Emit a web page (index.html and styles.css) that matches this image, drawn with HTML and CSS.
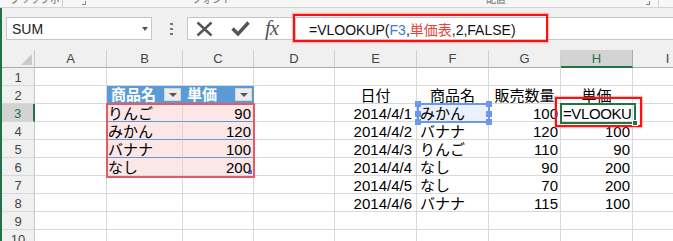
FILE: index.html
```html
<!DOCTYPE html>
<html lang="ja">
<head>
<meta charset="utf-8">
<title>VLOOKUP</title>
<link rel="stylesheet" href="styles.css">
</head>
<body>
<div class="app">
  <div class="ribbon">
    <span class="rlabel l1">クリップボード</span>
    <span class="rsep s1"></span>
    <span class="launcher ln1"></span>
    <span class="rlabel l2">フォント</span>
    <span class="rlabel l3">配置</span>
    <span class="launcher ln2"></span>
    <span class="rsep s2"></span>
  </div>
  <div class="main">
    <div class="fbar">
      <div class="namebox"><span>SUM</span><span class="nbdrop"></span></div>
      <svg class="dots" width="3" height="12" viewBox="0 0 3 12"><rect x="0" y="0" width="3" height="2" fill="#777"/><rect x="0" y="5" width="3" height="2" fill="#777"/><rect x="0" y="10" width="3" height="2" fill="#777"/></svg>
      <div class="fxbox">
        <svg class="ic-x" width="17" height="16" viewBox="0 0 17 16"><path d="M1.5 1.5 L15.5 14.5 M15.5 1.5 L1.5 14.5" stroke="#555" stroke-width="2.4" fill="none"/></svg>
        <svg class="ic-ok" width="19" height="15" viewBox="0 0 19 15"><path d="M1.5 7.5 L7 13 L17.5 1.5" stroke="#555" stroke-width="3.4" fill="none"/></svg>
        <span class="ic-fx">fx</span>
      </div>
      <div class="finput">
        <span class="ftext">=VLOOKUP(<span class="fblue">F3</span>,<span class="fred">単価表</span>,2,FALSE)</span>
        <div class="fmark"></div>
      </div>
    </div>
    <div class="sheet">
      <div class="grid">
        <div class="corner"><span class="tri"></span></div>
        <div class="ch">A</div><div class="ch">B</div><div class="ch">C</div><div class="ch">D</div><div class="ch">E</div><div class="ch">F</div><div class="ch">G</div><div class="ch on">H</div><div class="ch">I</div>

        <div class="rh">1</div><div class="c"></div><div class="c"></div><div class="c"></div><div class="c"></div><div class="c"></div><div class="c"></div><div class="c"></div><div class="c"></div><div class="c"></div>

        <div class="rh">2</div><div class="c"></div>
        <div class="c th"><span>商品名</span><span class="dd"></span></div>
        <div class="c th"><span>単価</span><span class="dd"></span></div>
        <div class="c"></div><div class="c ctr">日付</div><div class="c ctr">商品名</div><div class="c ctr">販売数量</div><div class="c ctr">単価</div><div class="c"></div>

        <div class="rh on">3</div><div class="c"></div>
        <div class="c pk">りんご</div><div class="c pk r">90</div>
        <div class="c"></div><div class="c r dt">2014/4/1</div><div class="c fl selfill">みかん</div><div class="c r">100</div><div class="c hv">=VLOOKUP</div><div class="c"></div>

        <div class="rh">4</div><div class="c"></div>
        <div class="c pk">みかん</div><div class="c pk r">120</div>
        <div class="c"></div><div class="c r dt">2014/4/2</div><div class="c fl">バナナ</div><div class="c r">120</div><div class="c r">100</div><div class="c"></div>

        <div class="rh">5</div><div class="c"></div>
        <div class="c pk">バナナ</div><div class="c pk r">100</div>
        <div class="c"></div><div class="c r dt">2014/4/3</div><div class="c fl">りんご</div><div class="c r">110</div><div class="c r">90</div><div class="c"></div>

        <div class="rh">6</div><div class="c"></div>
        <div class="c pk last">なし</div><div class="c pk last r">200</div>
        <div class="c"></div><div class="c r dt">2014/4/4</div><div class="c fl">なし</div><div class="c r">90</div><div class="c r">200</div><div class="c"></div>

        <div class="rh">7</div><div class="c"></div><div class="c"></div><div class="c"></div><div class="c"></div>
        <div class="c r dt">2014/4/5</div><div class="c fl">なし</div><div class="c r">70</div><div class="c r">200</div><div class="c"></div>

        <div class="rh">8</div><div class="c"></div><div class="c"></div><div class="c"></div><div class="c"></div>
        <div class="c r dt">2014/4/6</div><div class="c fl">バナナ</div><div class="c r">115</div><div class="c r">100</div><div class="c"></div>

        <div class="rh">9</div><div class="c"></div><div class="c"></div><div class="c"></div><div class="c"></div><div class="c"></div><div class="c"></div><div class="c"></div><div class="c"></div><div class="c"></div>

        <div class="rh">10</div><div class="c"></div><div class="c"></div><div class="c"></div><div class="c"></div><div class="c"></div><div class="c"></div><div class="c"></div><div class="c"></div><div class="c"></div>
      </div>
      <div class="overlay">
        <div class="tblmark"></div>
        <div class="tblcorner"></div>
        <div class="fsel"><i class="h tl"></i><i class="h tr"></i><i class="h ml"></i><i class="h mr"></i><i class="h bl"></i><i class="h br"></i></div>
        <div class="active"><i class="fillh"></i></div>
        <div class="hmark"></div>
      </div>
    </div>
  </div>
</div>
</body>
</html>
```

FILE: styles.css
```css
* { box-sizing: border-box; }
html, body { margin: 0; padding: 0; }
body {
  width: 673px;
  height: 241px;
  overflow: hidden;
  background: #ffffff;
  font-family: "Liberation Sans", "Noto Sans CJK JP", sans-serif;
}
.app { display: flex; flex-direction: column; height: 241px; }

/* ribbon strip (cut off at top) */
.ribbon {
  height: 8px;
  flex: none;
  background: #f7f7f7;
  border-bottom: 1px solid #d4d4d4;
  display: flex;
  align-items: flex-end;
  overflow: hidden;
  font-family: "Noto Sans CJK JP", sans-serif;
  font-size: 10px;
  color: #6a6a6a;
}
.rlabel { line-height: 12px; margin-bottom: 2px; white-space: nowrap; overflow: hidden; flex: none; }
.l1 { margin-left: 10px; width: 50px; }
.rsep { width: 1px; height: 7px; background: #d0d0d0; flex: none; }
.s1 { margin-left: 2px; }
.launcher { width: 4px; height: 4px; border-right: 1px solid #888; border-bottom: 1px solid #888; flex: none; margin-bottom: 2px; }
.ln1 { margin-left: 19px; }
.l2 { margin-left: 106px; }
.l3 { margin-left: 254px; }
.ln2 { margin-left: 140px; }
.s2 { margin-left: 8px; }

.main {
  flex: 1;
  display: flex;
  flex-direction: column;
  border-left: 2px solid #217346;
  min-height: 0;
}

/* formula bar */
.fbar {
  height: 42px;
  flex: none;
  background: #f0f0f0;
  display: flex;
  align-items: flex-start;
  padding: 9px 0 0 4px;
}
.namebox {
  width: 146px;
  height: 23px;
  background: #fff;
  border: 1px solid #c6c6c6;
  display: flex;
  align-items: center;
  padding: 0 3px 0 5px;
  font-size: 14px;
  color: #222;
}
.nbdrop {
  margin-left: auto;
  width: 0; height: 0;
  border-left: 3.5px solid transparent;
  border-right: 3.5px solid transparent;
  border-top: 4px solid #555;
}
.dots { margin: 6px 0 0 18px; flex: none; }
.fxbox {
  width: 106px;
  height: 23px;
  margin-left: 14px;
  background: #fff;
  border: 1px solid #c6c6c6;
  border-right: none;
  display: flex;
  align-items: center;
  padding-left: 8px;
}
.ic-x { flex: none; }
.ic-ok { flex: none; margin-left: 18px; }
.ic-fx {
  margin-left: 15px;
  font-family: "Liberation Serif", serif;
  font-style: italic;
  font-size: 21px;
  line-height: 21px;
  color: #555;
  letter-spacing: -1px;
}
.finput {
  flex: 1;
  height: 23px;
  margin-left: 2px;
  background: #fff;
  border: 1px solid #c6c6c6;
  border-right: none;
  position: relative;
  padding-left: 13px;
  display: flex;
  align-items: center;
  font-size: 14px;
  color: #111;
  white-space: nowrap;
}
.fblue { color: #3c78d8; }
.fred { color: #e8453c; }
.fmark {
  position: absolute;
  left: -3px;
  top: -4px;
  width: 255px;
  height: 28px;
  border: 2px solid #ff1010;
  box-shadow: 0 0 1px 1px rgba(255, 80, 80, 0.35);
}

/* sheet */
.sheet { position: relative; flex: 1; overflow: hidden; }
.grid, .overlay {
  display: grid;
  grid-template-columns: 33px 72px 76px 71px 81px 82px 72px 72px 72px 70px;
  grid-template-rows: repeat(11, 18px);
}
.overlay { position: absolute; left: 0; top: 0; pointer-events: none; }

.corner {
  background: #f0f0f0;
  border-right: 1px solid #c6c6c6;
  border-bottom: 1px solid #ababab;
  display: flex;
  justify-content: flex-end;
  align-items: flex-end;
  padding: 0 2px 2px 0;
}
.tri {
  width: 0; height: 0;
  border-left: 11px solid transparent;
  border-bottom: 11px solid #c9c9c9;
}
.ch {
  background: #f0f0f0;
  border-right: 1px solid #d0d0d0;
  border-bottom: 1px solid #ababab;
  text-align: center;
  font-size: 13px;
  line-height: 17px;
  color: #444;
}
.ch.on {
  background: #d3d3d3;
  border-right-color: #ababab;
  border-bottom: 2px solid #217346;
  color: #217346;
}
.rh {
  background: #f0f0f0;
  border-right: 1px solid #c6c6c6;
  border-bottom: 1px solid #d8d8d8;
  text-align: center;
  font-size: 13px;
  line-height: 19px;
  color: #444;
}
.rh.on {
  background: #d3d3d3;
  border-right: 2px solid #217346;
  color: #217346;
}
.c {
  border-right: 1px solid #d9d9d9;
  border-bottom: 1px solid #d9d9d9;
  font-size: 15px;
  line-height: 19px;
  padding: 0 2px 0 1px;
  white-space: nowrap;
  overflow: hidden;
  color: #000;
}
.r { text-align: right; }
.ctr { text-align: center; padding: 0; overflow: visible; }
.dt { padding-right: 4px; }
.fl { padding-left: 3px; }
.hv { padding-left: 2px; letter-spacing: -0.4px; }
.selfill { background: #eaf1fc; }

.th {
  background: #5b9bd5;
  border-right-color: #5b9bd5;
  border-bottom-color: #5b9bd5;
  color: #fff;
  font-weight: bold;
  display: flex;
  align-items: center;
  justify-content: space-between;
  padding: 0 1px 0 4px;
}
.dd {
  width: 17px;
  height: 13px;
  background: #ececec;
  border: 1px solid #d6d6d6;
  display: flex;
  align-items: center;
  justify-content: center;
}
.dd::after {
  content: "";
  width: 0; height: 0;
  border-left: 4px solid transparent;
  border-right: 4px solid transparent;
  border-top: 4px solid #555;
}
.pk {
  background: #fce6e6;
  border-right-color: #e4cfd2;
  border-bottom: 1px solid #5b9bd5;
}
.pk.last { border-bottom-color: #d9d9d9; }

/* overlays */
.tblmark {
  grid-column: 3 / 5;
  grid-row: 4 / 8;
  margin: -1px -1px -2px -1px;
  border: 2px solid #e35b66;
}
.tblcorner {
  grid-column: 4 / 5;
  grid-row: 7 / 8;
  justify-self: end;
  align-self: end;
  width: 4px;
  height: 4px;
  margin: 0 2px 2px 0;
  border-right: 2px solid #4472c4;
  border-bottom: 2px solid #4472c4;
}
.fsel {
  grid-column: 7 / 8;
  grid-row: 4 / 5;
  margin: -1px -1px -1px 0;
  border: 2px solid #6a98ea;
  position: relative;
}
.h {
  position: absolute;
  width: 6px;
  height: 6px;
  background: #6a98ea;
}
.tl { left: -4px; top: -4px; }
.tr { right: -4px; top: -4px; }
.ml { left: -4px; top: 6px; }
.mr { right: -4px; top: 6px; }
.bl { left: -4px; bottom: -4px; }
.br { right: -4px; bottom: -4px; }
.active {
  grid-column: 9 / 10;
  grid-row: 4 / 5;
  margin: -1px -3px -2px -1px;
  border: 2px solid #217346;
  position: relative;
}
.fillh {
  position: absolute;
  right: -4px;
  bottom: -4px;
  width: 6px;
  height: 6px;
  background: #217346;
  border: 1px solid #fff;
}
.hmark {
  grid-column: 9 / 10;
  grid-row: 4 / 5;
  margin: -7px -9px -5px -6px;
  border: 2px solid #ff1010;
  box-shadow: 0 0 1px 1px rgba(255, 80, 80, 0.35);
}
```
